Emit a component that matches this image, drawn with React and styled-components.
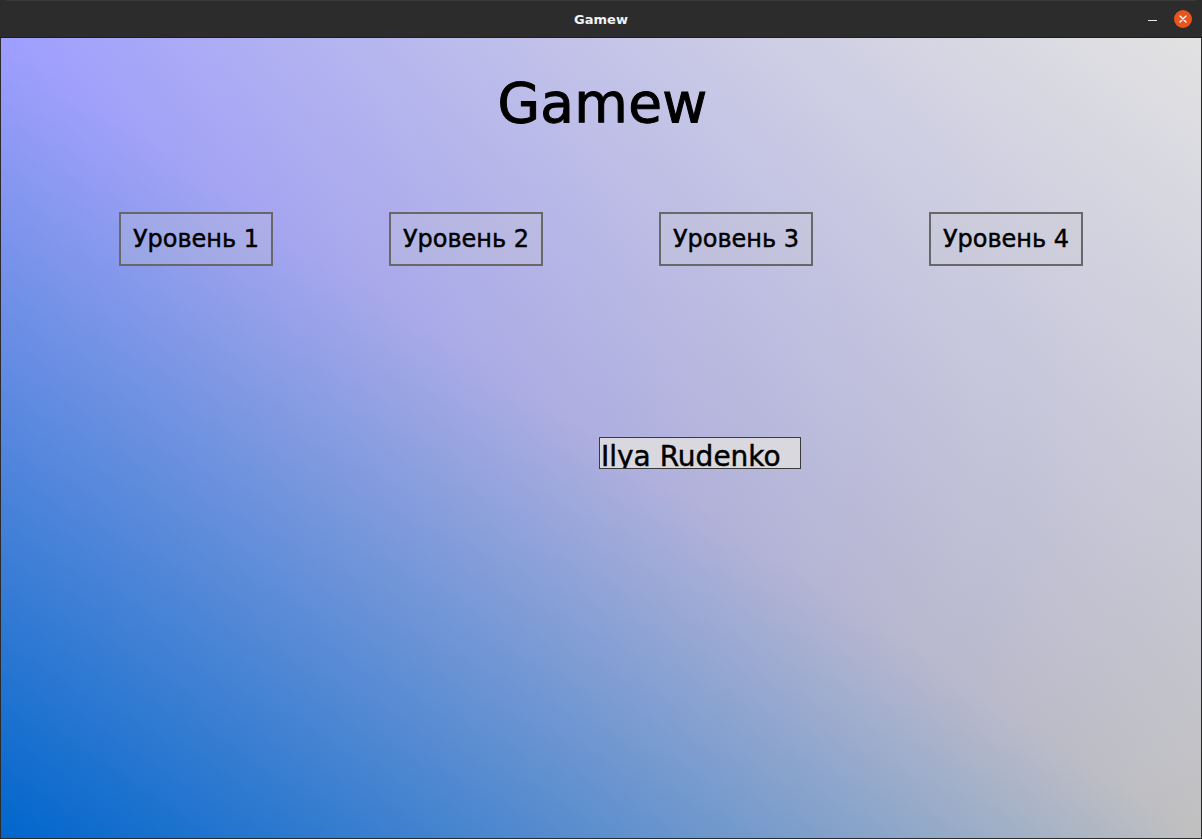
import React from 'react';
import styled, { createGlobalStyle } from 'styled-components';

const GlobalStyle = createGlobalStyle`
  html, body {
    margin: 0;
    padding: 0;
    width: 1202px;
    height: 839px;
    overflow: hidden;
    background: #2b2b2b;
  }
`;

const Window = styled.div`
  width: 1202px;
  height: 839px;
  display: flex;
  flex-direction: column;
  background: #2b2b2b;
  border-radius: 8px 8px 0 0;
  overflow: hidden;
  box-sizing: border-box;
`;

const TitleBar = styled.div`
  flex: none;
  display: grid;
  grid-template-columns: 1fr auto 1fr;
  align-items: center;
  background: #2c2c2c;
  border-top: 1px solid #3a3a3a;
  border-bottom: 1px solid #1e1e1e;
  box-sizing: border-box;
  height: 38px;
  color: #f2f2f2;
  font-family: "DejaVu Sans", "Noto Sans", sans-serif;
  font-weight: bold;
  font-size: 13px;
`;

const TitleText = styled.div`
  grid-column: 2;
  padding-top: 1px;
`;

const Controls = styled.div`
  grid-column: 3;
  justify-self: end;
  display: flex;
  align-items: center;
  gap: 17px;
  padding-right: 10px;
`;

const MinButton = styled.div`
  width: 9px;
  height: 1px;
  margin-top: 3px;
  background: #e8e8e8;
`;

const CloseButton = styled.div`
  width: 18px;
  height: 18px;
  border-radius: 50%;
  background: #e9541f;
  display: flex;
  align-items: center;
  justify-content: center;
`;

const Content = styled.main`
  flex: 1;
  margin: 0 1px 1px;
  display: flex;
  flex-direction: column;
  align-items: center;
  font-family: "DejaVu Sans", "Noto Sans", sans-serif;
  color: #000;
  -webkit-text-stroke: 0.45px #000;
  background:
    linear-gradient(to top right, rgba(0, 102, 204, 1) 0%, rgba(0, 102, 204, 0) 50%, rgba(226, 226, 226, 0) 50%, rgba(226, 226, 226, 1) 100%),
    linear-gradient(to bottom right, #9e9eff 0%, #c0c0c0 100%);
`;

const Heading = styled.h1`
  margin: 33px 0 0;
  font-size: 55px;
  font-weight: normal;
  line-height: 64px;
  padding-left: 3px;
  letter-spacing: 0.3px;
  -webkit-text-stroke: 1px #000;
`;

const LevelRow = styled.div`
  margin-top: 77px;
  width: 1080px;
  display: grid;
  grid-template-columns: repeat(4, 1fr);
  justify-items: center;
`;

const LevelButton = styled.button`
  width: 154px;
  height: 54px;
  box-sizing: border-box;
  border: 2px solid #686868;
  background: rgba(200, 200, 210, 0.26);
  font-family: inherit;
  font-size: 24px;
  line-height: 28px;
  color: #000;
  -webkit-text-stroke: inherit;
  padding: 0;
  cursor: pointer;
`;

const NameTag = styled.div`
  margin-top: 171px;
  margin-left: 198px;
  width: 202px;
  height: 32px;
  box-sizing: border-box;
  border: 1px solid #3a3a3a;
  background: #d9d8df;
  font-size: 28px;
  line-height: 28px;
  padding: 5px 0 0 1px;
  overflow: hidden;
  white-space: nowrap;
`;

const levels = ['Уровень 1', 'Уровень 2', 'Уровень 3', 'Уровень 4'];

export default function App() {
  return (
    <>
      <GlobalStyle />
      <Window>
        <TitleBar>
          <TitleText>Gamew</TitleText>
          <Controls>
            <MinButton />
            <CloseButton>
              <svg width="8" height="8" viewBox="0 0 8 8">
                <path d="M1 1L7 7M7 1L1 7" stroke="#fff" strokeWidth="1.4" strokeLinecap="round" />
              </svg>
            </CloseButton>
          </Controls>
        </TitleBar>
        <Content>
          <Heading>Gamew</Heading>
          <LevelRow>
            {levels.map((l) => (
              <LevelButton key={l}>{l}</LevelButton>
            ))}
          </LevelRow>
          <NameTag>Ilya Rudenko</NameTag>
        </Content>
      </Window>
    </>
  );
}
